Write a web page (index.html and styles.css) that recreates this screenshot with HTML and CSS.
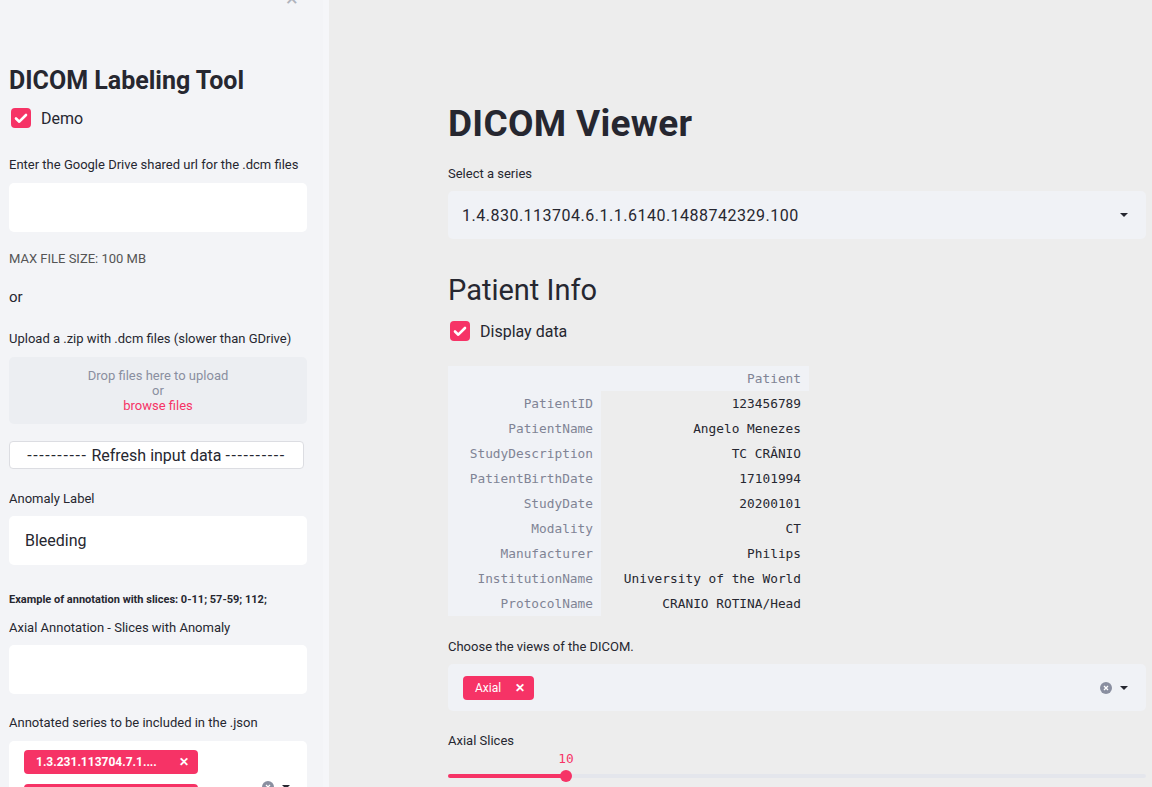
FILE: index.html
```html
<!DOCTYPE html>
<html>
<head>
<meta charset="utf-8">
<link rel="stylesheet" href="styles.css">
</head>
<body>
<div class="app">
  <aside class="sidebar">
    <div class="close-btn">×</div>
    <h2 class="side-title">DICOM Labeling Tool</h2>
    <label class="check-row mt12">
      <span class="checkbox"><svg viewBox="0 0 20 20" width="20" height="20"><path d="M5 10.5l3.3 3.2L15 7" fill="none" stroke="#fff" stroke-width="2.6" stroke-linecap="round" stroke-linejoin="round"/></svg></span>
      <span class="check-text">Demo</span>
    </label>
    <div class="label mt29">Enter the Google Drive shared url for the .dcm files</div>
    <div class="text-input mt10"></div>
    <div class="caption mt19">MAX FILE SIZE: 100 MB</div>
    <div class="or-text mt20">or</div>
    <div class="label mt24">Upload a .zip with .dcm files (slower than GDrive)</div>
    <div class="dropzone mt10">
      <span>Drop files here to upload</span>
      <span>or</span>
      <span class="browse">browse files</span>
    </div>
    <div class="button mt17"><span class="dashes">----------</span> Refresh input data <span class="dashes">----------</span></div>
    <div class="label mt22">Anomaly Label</div>
    <div class="text-input mt9"><span class="input-value">Bleeding</span></div>
    <div class="small-bold mt28">Example of annotation with slices: 0-11; 57-59; 112;</div>
    <div class="label mt13">Axial Annotation - Slices with Anomaly</div>
    <div class="text-input mt9"></div>
    <div class="label mt21">Annotated series to be included in the .json</div>
    <div class="side-multi mt10">
      <div class="tags-col">
        <span class="tag tag-bold">1.3.231.113704.7.1.... <span class="tag-x">✕</span></span>
        <span class="tag tag-bold">1.3.231.113704.7.1.... <span class="tag-x">✕</span></span>
      </div>
      <div class="multi-icons side-icons">
        <span class="clear-icon"><svg viewBox="0 0 12 12" width="12" height="12"><circle cx="6" cy="6" r="6" fill="#8a8fa0"/><path d="M4 4l4 4M8 4l-4 4" stroke="#fff" stroke-width="1.3"/></svg></span>
        <span class="caret"></span>
      </div>
    </div>
  </aside>
  <main class="main">
    <div class="block">
      <h1 class="page-title">DICOM Viewer</h1>
      <div class="label mt20">Select a series</div>
      <div class="select mt9">
        <span class="select-value">1.4.830.113704.6.1.1.6140.1488742329.100</span>
        <span class="caret"></span>
      </div>
      <h2 class="section-title mt33">Patient Info</h2>
      <label class="check-row mt13">
        <span class="checkbox"><svg viewBox="0 0 20 20" width="20" height="20"><path d="M5 10.5l3.3 3.2L15 7" fill="none" stroke="#fff" stroke-width="2.6" stroke-linecap="round" stroke-linejoin="round"/></svg></span>
        <span class="check-text">Display data</span>
      </label>
      <table class="df mt25">
        <thead>
          <tr><th class="blank"></th><th class="col-head">Patient</th></tr>
        </thead>
        <tbody>
          <tr><th>PatientID</th><td>123456789</td></tr>
          <tr><th>PatientName</th><td>Angelo Menezes</td></tr>
          <tr><th>StudyDescription</th><td>TC CRÂNIO</td></tr>
          <tr><th>PatientBirthDate</th><td>17101994</td></tr>
          <tr><th>StudyDate</th><td>20200101</td></tr>
          <tr><th>Modality</th><td>CT</td></tr>
          <tr><th>Manufacturer</th><td>Philips</td></tr>
          <tr><th>InstitutionName</th><td>University of the World</td></tr>
          <tr><th>ProtocolName</th><td>CRANIO ROTINA/Head</td></tr>
        </tbody>
      </table>
      <div class="label mt23">Choose the views of the DICOM.</div>
      <div class="select multi mt9">
        <span class="tag">Axial <span class="tag-x">✕</span></span>
        <div class="multi-icons">
          <span class="clear-icon"><svg viewBox="0 0 12 12" width="12" height="12"><circle cx="6" cy="6" r="6" fill="#8a8fa0"/><path d="M4 4l4 4M8 4l-4 4" stroke="#fff" stroke-width="1.3"/></svg></span>
          <span class="caret"></span>
        </div>
      </div>
      <div class="label mt22">Axial Slices</div>
      <div class="slider">
        <div class="slider-value" style="left: 118px">10</div>
        <div class="track"><div class="fill" style="width: 118px"></div><div class="thumb" style="left: 118px"></div></div>
      </div>
    </div>
  </main>
</div>
</body>
</html>
```

FILE: styles.css
```css
* { box-sizing: border-box; }
html, body { margin: 0; padding: 0; }
body {
  width: 1152px;
  height: 787px;
  overflow: hidden;
  font-family: Roboto, "Noto Sans", sans-serif;
  color: #262730;
  background: #ededed;
}
.app { display: flex; height: 787px; }

.sidebar {
  position: relative;
  width: 329px;
  flex: none;
  height: 787px;
  overflow: hidden;
  background: #f3f4f7;
  padding: 66px 16px 0 9px;
  border-right: 6px solid #f5f6f9;
}
.close-btn {
  position: absolute;
  left: 286px;
  top: -12px;
  font-size: 22px;
  color: #b0b3bd;
  line-height: 22px;
}

.side-title {
  margin: 0;
  font-size: 25px;
  line-height: 30px;
  font-weight: 700;
}
.check-row {
  display: flex;
  align-items: center;
  height: 20px;
  padding-left: 2px;
}
.checkbox {
  width: 20px;
  height: 20px;
  border-radius: 4px;
  background: #f63366;
  display: block;
}
.checkbox svg { display: block; }
.check-text {
  margin-left: 10px;
  font-size: 16px;
}
.label {
  font-size: 13px;
  line-height: 16px;
  color: #262730;
}
.text-input {
  height: 49px;
  background: #fff;
  border-radius: 5px;
  display: flex;
  align-items: center;
  padding-left: 16px;
}
.input-value { font-size: 16px; }
.caption {
  font-size: 13px;
  line-height: 16px;
  color: #555;
}
.or-text {
  font-size: 15px;
  line-height: 20px;
}
.dropzone {
  height: 67px;
  background: #eceef2;
  border-radius: 5px;
  display: flex;
  flex-direction: column;
  align-items: center;
  justify-content: center;
  font-size: 13px;
  line-height: 15px;
  color: #8a8fa0;
}
.browse { color: #f63366; }
.button {
  height: 28px;
  width: 295px;
  background: #fff;
  border: 1px solid #dcdde2;
  border-radius: 4px;
  display: flex;
  align-items: center;
  justify-content: center;
  font-size: 16px;
  white-space: pre;
}
.dashes { letter-spacing: 1.6px; }
.small-bold {
  font-size: 11px;
  line-height: 14px;
  font-weight: 700;
}
.side-multi {
  background: #fff;
  border-radius: 5px;
  height: 80px;
  display: flex;
  padding: 9px 12px 0 15px;
}
.tags-col {
  display: flex;
  flex-direction: column;
  gap: 10px;
  flex: 1;
}
.tag {
  display: inline-flex;
  align-items: center;
  justify-content: space-between;
  height: 24px;
  background: #f63366;
  color: #fff;
  border-radius: 4px;
  font-size: 12px;
  padding: 0 9px 0 12px;
}
.tag-bold {
  width: 174px;
  font-weight: 700;
  font-size: 12px;
}
.tag-x {
  font-weight: 700;
  font-size: 12px;
  margin-left: 14px;
}
.multi-icons {
  display: flex;
  align-items: center;
  gap: 8px;
}
.side-icons { align-self: flex-start; margin-top: 31px; margin-right: 5px; }
.clear-icon svg { display: block; }
.caret {
  width: 0;
  height: 0;
  border-left: 4px solid transparent;
  border-right: 4px solid transparent;
  border-top: 4px solid #262730;
}

.main { flex: 1; }
.block {
  margin-left: 119px;
  width: 698px;
  padding-top: 102px;
}
.page-title {
  margin: 0;
  font-size: 37px;
  line-height: 44px;
  font-weight: 700;
  letter-spacing: 0.3px;
}
.select {
  height: 48px;
  background: #f0f2f6;
  border-radius: 5px;
  display: flex;
  align-items: center;
  justify-content: space-between;
  padding: 0 18px 0 14px;
}
.select-value { font-size: 16px; letter-spacing: 0.5px; }
.section-title {
  margin: 0;
  font-size: 29px;
  line-height: 36px;
  font-weight: 400;
}
.df {
  border-collapse: collapse;
  font-family: "DejaVu Sans Mono", "Liberation Mono", monospace;
  font-size: 12.8px;
}
.df th, .df td {
  height: 25px;
  padding: 0 8px 0 8px;
  text-align: right;
  white-space: nowrap;
  font-weight: 400;
}
.df thead th { background: #f0f2f6; color: #808495; }
.df tbody th { background: #f0f2f6; color: #808495; width: 153px; }
.df tbody td { color: #262730; width: 208px; }
.multi {
  height: 47px;
  padding-left: 15px;
}
.slider {
  position: relative;
  height: 40px;
}
.slider-value {
  position: absolute;
  top: 2px;
  transform: translateX(-50%);
  font-family: "DejaVu Sans Mono", "Liberation Mono", monospace;
  font-size: 12.8px;
  color: #f63366;
}
.track {
  position: absolute;
  top: 25px;
  left: 0;
  right: 0;
  height: 4px;
  border-radius: 2px;
  background: #e4e6ec;
}
.fill {
  height: 4px;
  border-radius: 2px;
  background: #f63366;
}
.thumb {
  position: absolute;
  top: -4px;
  width: 12px;
  height: 12px;
  margin-left: -6px;
  border-radius: 50%;
  background: #f63366;
}

.mt9 { margin-top: 9px; }
.mt10 { margin-top: 10px; }
.mt12 { margin-top: 12px; }
.mt13 { margin-top: 13px; }
.mt17 { margin-top: 17px; }
.mt19 { margin-top: 19px; }
.mt20 { margin-top: 20px; }
.mt21 { margin-top: 21px; }
.mt22 { margin-top: 22px; }
.mt23 { margin-top: 23px; }
.mt24 { margin-top: 24px; }
.mt25 { margin-top: 25px; }
.mt28 { margin-top: 28px; }
.mt29 { margin-top: 29px; }
.mt33 { margin-top: 33px; }
```
